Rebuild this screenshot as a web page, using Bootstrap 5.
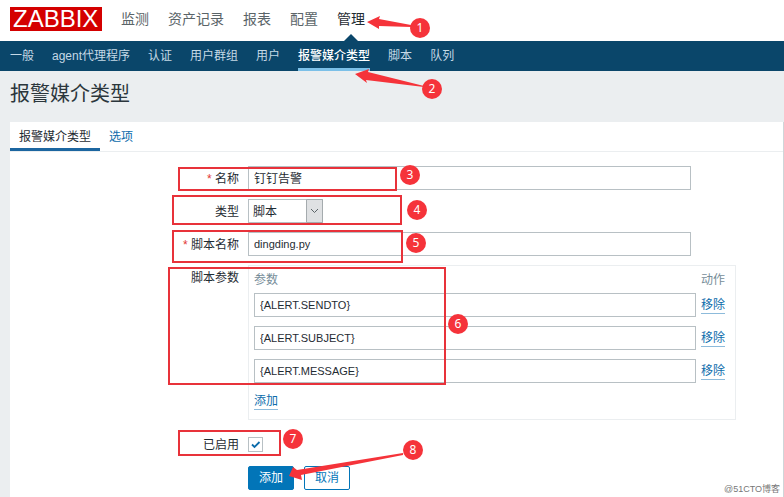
<!DOCTYPE html>
<html lang="zh-CN">
<head>
<meta charset="utf-8">
<meta name="viewport" content="width=device-width, initial-scale=1">
<title>报警媒介类型</title>
<link href="https://cdn.jsdelivr.net/npm/bootstrap@5.3.0/dist/css/bootstrap.min.css" rel="stylesheet">
<style>
body { font: 12px/16px "Liberation Sans", "Noto Sans CJK SC", sans-serif; color: #1f2c33; background: #ebeef0; }
a { color: #0d6cab; text-decoration: none; }
.top-menu { height: 41px; padding: 0 10px 4px; gap: 19px; font-size: 14px; }
.top-menu a { color: #5a6468; }
.top-menu a.active { color: #1f2c33; position: relative; }
.top-menu a.active::after { content: ""; position: absolute; left: 50%; top: 23px; margin-left: -7px; border: 7px solid transparent; border-top: 0; border-bottom-color: #0a466a; }
.brand { background: #d40000; color: #fff !important; font-size: 24px; line-height: 24px; padding: 0 3px; width: 92px; }
.sub-menu { background: #0a466a; height: 30px; padding: 0 10px; gap: 18px; }
.sub-menu a { color: #c5d9e6; padding-top: 4px; line-height: 23px; border-bottom: 3px solid transparent; white-space: nowrap; }
.sub-menu a.active { color: #fff; font-weight: 500; border-color: #7cc0e8; }
.page-title { font-size: 20px; line-height: 24px; padding: 11px 10px 16px; color: #2b363c; }
.sheet { margin-left: 10px; border-right: 1px solid #cfd6d9; }
.tab-row { height: 30px; border-bottom: 1px solid #ebeef0; }
.tab-row button { border: 0; background: none; color: #0d6cab; padding: 4px 9px 0; line-height: 23px; border-bottom: 3px solid transparent; }
.tab-row button.active { color: #1f2c33; border-color: #1c66a0; }
.form-area { padding: 14px 0 6px; }
.form-line { display: grid; grid-template-columns: 229px minmax(0, 1fr); column-gap: 9px; margin-bottom: 9px; }
.form-line > label, .form-line > .caption { text-align: right; line-height: 26px; height: 24px; }
.req::before { content: "* "; color: #e33734; }
.field { height: 24px; width: 100%; max-width: 443px; border: 1px solid #b8c0c4; padding: 0 5px; font-size: 11px; color: #1f2c33; background: #fff; }
.field.zh { font-size: 12px; padding-bottom: 2px; }
.pick { position: relative; width: 75px; }
.pick select { appearance: none; width: 100%; height: 24px; border: 1px solid #b8c0c4; padding: 2px 20px 0 4px; background: #fff; color: #1f2c33; }
.pick svg { position: absolute; right: 0; top: 0; pointer-events: none; }
.param-box { max-width: 488px; border: 1px solid #ebeef0; padding: 5px 9px 9px 5px; margin-bottom: 3px; }
.param-box table { width: 100%; margin-bottom: 1px; }
.param-box th { font-weight: 400; color: #768d99; line-height: 18px; padding: 0 0 4px; }
.param-box td { padding: 0 0 9px; }
.param-box th:last-child, .param-box td:last-child { width: 30px; padding-left: 5px; white-space: nowrap; }
.dotted { border: 0; border-bottom: 1px solid #8dbbdb; padding: 0; background: none; color: #0d6cab; line-height: 15px; }
.tick { appearance: none; width: 15px; height: 15px; margin: 5px 0; border: 1px solid #b8c0c4; background: #fff; display: block; }
.tick:checked { background: #fff url("data:image/svg+xml,%3Csvg xmlns='http://www.w3.org/2000/svg' viewBox='0 0 13 13'%3E%3Cpath d='M3 6.5 5.5 9 10.5 4' fill='none' stroke='%230d6cab' stroke-width='1.8'/%3E%3C/svg%3E"); }
.actions { gap: 10px; }
.act { height: 24px; width: 46px; padding: 0; border: 1px solid #0275b8; border-radius: 2px; font-size: 12px; line-height: 22px; color: #0275b8; background: #fff; }
.act.main { background: #0275b8; color: #fff; }
.notes { position: absolute; left: 0; top: 0; pointer-events: none; }
.credit { position: absolute; right: 4px; bottom: 2px; color: #777; font-size: 9px; line-height: 12px; }
</style>
<script src="https://cdn.jsdelivr.net/npm/bootstrap@5.3.0/dist/js/bootstrap.bundle.min.js"></script>
</head>
<body>
<div class="position-relative d-flex flex-column min-vh-100">
  <header>
    <nav class="top-menu d-flex align-items-center bg-white">
      <a class="brand" href="#">ZABBIX</a>
      <a href="#">监测</a><a href="#">资产记录</a><a href="#">报表</a><a href="#">配置</a><a class="active" href="#">管理</a>
    </nav>
    <nav class="sub-menu d-flex">
      <a href="#">一般</a><a href="#">agent代理程序</a><a href="#">认证</a><a href="#">用户群组</a><a href="#">用户</a><a class="active" href="#">报警媒介类型</a><a href="#">脚本</a><a href="#">队列</a>
    </nav>
  </header>
  <h1 class="page-title m-0 fw-normal">报警媒介类型</h1>
  <main class="sheet bg-white flex-grow-1">
    <div class="tab-row d-flex" role="tablist">
      <button class="active" type="button" role="tab" aria-selected="true">报警媒介类型</button>
      <button type="button" role="tab" aria-selected="false">选项</button>
    </div>
    <form class="form-area">
      <div class="form-line">
        <label class="req" for="name">名称</label>
        <input class="field zh" id="name" type="text" value="钉钉告警">
      </div>
      <div class="form-line">
        <label for="type">类型</label>
        <div class="pick">
          <select id="type"><option>脚本</option></select>
          <svg width="17" height="24" viewBox="0 0 17 24" aria-hidden="true"><path d="M.5.5h16v23H.5z" fill="#dfe1e3" stroke="#a5abae"/><path d="M5 10l3.500 3.500L12 10" fill="none" stroke="#5b6468"/></svg>
        </div>
      </div>
      <div class="form-line">
        <label class="req" for="script">脚本名称</label>
        <input class="field" id="script" type="text" value="dingding.py">
      </div>
      <div class="form-line">
        <div class="caption">脚本参数</div>
        <div class="param-box">
          <table>
            <thead><tr><th>参数</th><th>动作</th></tr></thead>
            <tbody>
              <tr><td><input class="field d-block" type="text" aria-label="参数 1" value="{ALERT.SENDTO}"></td><td><button class="dotted" type="button">移除</button></td></tr>
              <tr><td><input class="field d-block" type="text" aria-label="参数 2" value="{ALERT.SUBJECT}"></td><td><button class="dotted" type="button">移除</button></td></tr>
              <tr><td><input class="field d-block" type="text" aria-label="参数 3" value="{ALERT.MESSAGE}"></td><td><button class="dotted" type="button">移除</button></td></tr>
            </tbody>
          </table>
          <button class="dotted" type="button">添加</button>
        </div>
      </div>
      <div class="form-line">
        <label for="enabled">已启用</label>
        <input class="tick" id="enabled" type="checkbox" checked>
      </div>
      <div class="form-line mb-0">
        <span></span>
        <div class="actions d-flex"><button class="act main" type="button">添加</button><button class="act" type="button">取消</button></div>
      </div>
    </form>
  </main>
  <div class="credit">@51CTO博客</div>
  <svg class="notes" width="784" height="490" viewBox="0 0 784 490" font-family="Noto Sans, sans-serif" font-size="12" text-anchor="middle">
    <g fill="none" stroke="#e8323a" stroke-width="2">
      <path d="M179 168h217v22H179zM173 196h228v28H173zM173 231h229v31H173zM169 268h276v116H169zM179 431h101v24H179z"/>
    </g>
    <g fill="#f5333a">
      <path d="M367 22L380 16L379 19L411 25V27L379 26L379 29zM355 74L369 69L368 72L424 86V87L366 80L367 83zM289 476L293 467L297 470L403 453V455L301 475L302 480z"/>
      <circle cx="420" cy="28" r="10"/><circle cx="432" cy="89" r="10"/><circle cx="410" cy="175" r="10"/><circle cx="417" cy="210" r="10"/><circle cx="416" cy="243" r="10"/><circle cx="458" cy="324" r="10"/><circle cx="293" cy="439" r="10"/><circle cx="413" cy="450" r="10"/>
    </g>
    <g fill="#fff">
      <text x="420" y="32">1</text><text x="432" y="93">2</text><text x="410" y="179">3</text><text x="417" y="214">4</text><text x="416" y="247">5</text><text x="458" y="328">6</text><text x="293" y="443">7</text><text x="413" y="454">8</text>
    </g>
  </svg>
</div>
</body>
</html>
